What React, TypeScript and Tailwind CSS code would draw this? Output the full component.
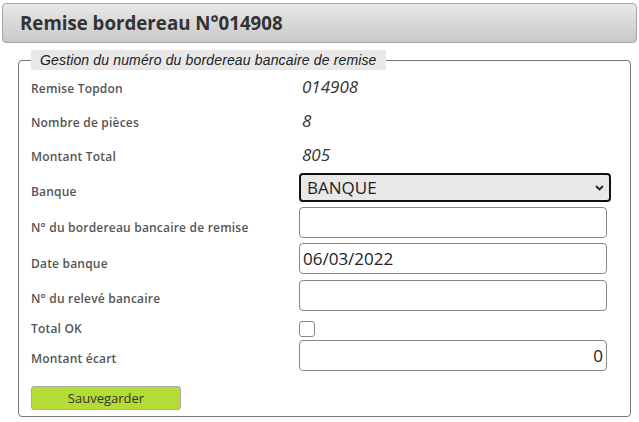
import React from 'react';

const labelCls = 'w-[268px] shrink-0 text-[12px] leading-[16px] tracking-[0.2px] font-semibold text-[#555]';
const inputCls =
  'block w-[308px] h-[31px] rounded-[4px] border border-[#888] bg-white px-[3px] text-[17px] text-[#222] outline-none';

const Row: React.FC<{ label: string; className?: string; labelClass?: string; children?: React.ReactNode }> = ({
  label,
  className,
  labelClass,
  children,
}) => (
  <div className={`flex ${className ?? ''}`}>
    <div className={`${labelCls} ${labelClass ?? ''}`}>{label}</div>
    <div>{children}</div>
  </div>
);

const App: React.FC = () => {
  return (
    <div className="h-[422px] w-[639px] bg-white pt-[3px] font-['Open_Sans',sans-serif]">
      <div className="mx-[2px] flex h-[40px] items-center rounded-[4px] border border-[#a5a5a5] bg-gradient-to-b from-[#e9e9e9] to-[#c8c8c8] pl-[17px]">
        <h1 className="text-[18.7px] font-bold text-[#333]">Remise bordereau N°014908</h1>
      </div>

      <fieldset className="ml-[18px] mt-[7px] w-[613px] rounded-[4px] border border-[#777] px-[12px] pb-[6px]">
        <legend className="h-[20px] bg-[#e8e8e8] px-[9px] font-['Liberation_Sans',sans-serif] text-[14px] leading-[20px] tracking-[0.15px] italic text-[#222]">
          Gestion du numéro du bordereau bancaire de remise
        </legend>

        <div className="flex flex-col">
          <Row label="Remise Topdon" className="h-[33px] items-center" labelClass="pt-[4px]">
            <span className="pl-[3px] text-[17px] italic text-[#333]">014908</span>
          </Row>
          <Row label="Nombre de pièces" className="h-[35px] items-center" labelClass="pt-[4px]">
            <span className="pl-[3px] text-[17px] italic text-[#333]">8</span>
          </Row>
          <Row label="Montant Total" className="h-[34px] items-center" labelClass="pt-[3px]">
            <span className="pl-[3px] text-[17px] italic text-[#333]">805</span>
          </Row>
          <Row label="Banque" className="mt-[1px] items-start" labelClass="pt-[11px]">
            <div className="relative">
              <select
                defaultValue="BANQUE"
                className="block h-[29px] w-[312px] appearance-none rounded-[4px] border-2 border-[#111] bg-[#e8e8e8] pl-[6px] text-[17px] text-[#222] outline-none"
              >
                <option>BANQUE</option>
              </select>
              <svg
                className="pointer-events-none absolute right-[7px] top-[12px]"
                width="9"
                height="6"
                viewBox="0 0 9 6"
              >
                <path d="M1 1l3.5 3.5L8 1" fill="none" stroke="#222" strokeWidth="1.8" />
              </svg>
            </div>
          </Row>
          <Row label="N° du bordereau bancaire de remise" className="mt-[5px] items-start" labelClass="pt-[13px]">
            <input className={inputCls} />
          </Row>
          <Row label="Date banque" className="mt-[5px] items-start" labelClass="pt-[13px]">
            <input className={inputCls} defaultValue="06/03/2022" />
          </Row>
          <Row label="N° du relevé bancaire" className="mt-[6px] items-start" labelClass="pt-[11px]">
            <input className={inputCls} />
          </Row>
          <Row label="Total OK" className="mt-[10px] h-[16px] items-start">
            <input
              type="checkbox"
              className="block h-[16px] w-[16px] appearance-none rounded-[3px] border border-[#888] bg-white"
            />
          </Row>
          <Row label="Montant écart" className="mt-[3px] items-start" labelClass="pt-[11px]">
            <input className={`${inputCls} text-right`} defaultValue="0" />
          </Row>
          <div className="mt-[15px]">
            <button className="block h-[24px] w-[150px] rounded-[3px] border border-[#aaa] bg-[#b5dc34] pt-[1px] text-[13px] text-[#333]">
              Sauvegarder
            </button>
          </div>
        </div>
      </fieldset>
    </div>
  );
};

export default App;
